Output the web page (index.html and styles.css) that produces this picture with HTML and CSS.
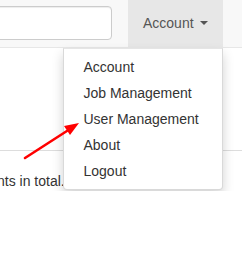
FILE: index.html
```html
<!DOCTYPE html>
<html lang="en">
<head>
    <meta charset="UTF-8">
    <meta name="viewport" content="width=device-width, initial-scale=1.0">
    <title>Clients</title>
    <link rel="stylesheet" href="styles.css">
</head>
<body>
    <nav class="navbar">
        <form class="navbar-form">
            <input type="text" class="search-input">
        </form>
        <div class="nav-dropdown">
            <a href="#" class="nav-link">Account <span class="caret"></span></a>
            <ul class="dropdown-menu">
                <li><a href="#">Account</a></li>
                <li><a href="#">Job Management</a></li>
                <li><a href="#">User Management</a></li>
                <li><a href="#">About</a></li>
                <li><a href="#">Logout</a></li>
            </ul>
        </div>
    </nav>

    <div class="content">
        <div class="table-rule"></div>
        <p class="summary">nts in total.</p>
    </div>

    <!-- annotation arrow -->
    <svg class="arrow" width="242" height="267" viewBox="0 0 242 267">
        <line x1="25" y1="158" x2="70" y2="129" stroke="#f00" stroke-width="2.6" stroke-linecap="round"/>
        <polygon points="79,123 64,126 70,135" fill="#f00"/>
    </svg>
</body>
</html>
```

FILE: styles.css
```css
/* General Styles */
body {
    margin: 0;
    padding: 0;
    font-family: "Liberation Sans", Arial, sans-serif;
    font-size: 14px;
    line-height: 20px;
    color: #333;
    background: #fff;
    overflow: hidden;
}

/* Navbar */
.navbar {
    display: flex;
    align-items: flex-start;
    height: 47px;
    background-color: #f8f8f8;
    border-bottom: 1px solid #e7e7e7;
}

.navbar-form {
    margin: 6px 0 0 -50px;
}

.search-input {
    display: block;
    width: 162px;
    height: 34px;
    padding: 6px 12px;
    border: 1px solid #ccc;
    border-radius: 4px;
    background: #fff;
    box-sizing: border-box;
    box-shadow: inset 0 1px 1px rgba(0, 0, 0, 0.075);
}

.nav-dropdown {
    position: relative;
    margin-left: 16px;
}

.nav-link {
    display: block;
    padding: 0 15px;
    line-height: 47px;
    color: #555;
    text-decoration: none;
    background-color: #e7e7e7;
}

.caret {
    display: inline-block;
    width: 0;
    height: 0;
    margin-left: 3px;
    vertical-align: middle;
    border-top: 4px solid #555;
    border-left: 4px solid transparent;
    border-right: 4px solid transparent;
    position: relative;
    top: -1px;
}

/* Dropdown */
.dropdown-menu {
    position: absolute;
    top: 48px;
    right: 0;
    z-index: 10;
    min-width: 160px;
    margin: 0;
    padding: 5px 0;
    list-style: none;
    background-color: #fff;
    border: 1px solid rgba(0, 0, 0, 0.15);
    border-top-color: rgba(0, 0, 0, 0.1);
    border-radius: 0 0 4px 4px;
    box-shadow: 0 6px 12px rgba(0, 0, 0, 0.175);
    box-sizing: border-box;
}

.dropdown-menu a {
    display: block;
    padding: 3px 19px;
    color: #333;
    text-decoration: none;
    white-space: nowrap;
}

/* Content */
.content {
    padding-top: 102px;
}

.table-rule {
    border-top: 1px solid #ddd;
}

.summary {
    margin: 20px 0 0 -3px;
}

.arrow {
    position: absolute;
    top: 0;
    left: 0;
    z-index: 20;
    pointer-events: none;
}
```
